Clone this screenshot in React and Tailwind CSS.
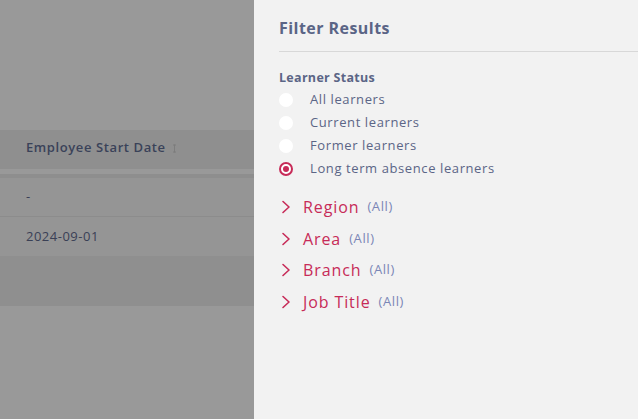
import React from "react";

const font = { fontFamily: '"Open Sans", "Noto Sans", sans-serif' };

function Radio({ checked }) {
  if (checked) {
    return (
      <span className="w-[14px] h-[14px] rounded-full border-[2px] border-[#c72b58] bg-white flex items-center justify-center">
        <span className="w-[6px] h-[6px] rounded-full bg-[#c72b58]" />
      </span>
    );
  }
  return <span className="w-[14px] h-[14px] rounded-full bg-white" />;
}

function Chevron() {
  return (
    <svg width="10" height="14" viewBox="0 0 10 14" fill="none" className="shrink-0">
      <path d="M2 1.5 L8 7 L2 12.5" stroke="#c72b58" strokeWidth="1.6" strokeLinecap="round" strokeLinejoin="round" />
    </svg>
  );
}

export default function App() {
  const opts = [
    ["All learners", false],
    ["Current learners", false],
    ["Former learners", false],
    ["Long term absence learners", true],
  ];
  const groups = ["Region", "Area", "Branch", "Job Title"];
  return (
    <div className="w-[638px] h-[419px] flex overflow-hidden" style={font}>
      <div className="w-[254px] h-full bg-[#999999] flex flex-col">
        <div className="h-[130px]" />
        <div className="h-[39px] bg-[#8f8f8f] flex items-center pl-[26px] pb-[4px]">
          <span className="text-[13px] font-semibold tracking-[0.6px] text-[#3a4259]">Employee Start Date</span>
          <svg width="5" height="9" viewBox="0 0 5 9" className="ml-[6px] mt-[1px]">
            <path d="M2.5 0.5 V8.5 M1 1 H4 M1 8 H4" stroke="#7d7d7d" strokeWidth="1" fill="none" />
          </svg>
        </div>
        <div className="h-[5px]" />
        <div className="h-[4px] bg-[#8e8e8e]" />
        <div className="h-[39px] bg-[#959595] border-b border-[#8c8c8c] flex items-center pl-[26px] text-[13px] tracking-[0.5px] text-[#3a4055]">-</div>
        <div className="h-[39px] bg-[#959595] flex items-center pl-[26px] text-[13px] tracking-[0.5px] text-[#3a4055]">2024-09-01</div>
        <div className="h-[50px] bg-[#8f8f8f]" />
      </div>
      <div className="flex-1 h-full bg-[#f2f2f2] pl-[25px]">
        <div className="h-[52px] border-b border-[#d8d8d8] pt-[17px]">
          <div className="text-[16px] leading-[22px] font-bold tracking-[0.45px] text-[#5b6586]">Filter Results</div>
        </div>
        <div className="pt-[17px] text-[12.5px] font-bold tracking-[0.3px] text-[#5b6586] leading-[18px]">Learner Status</div>
        <div className="flex flex-col pt-[1px]">
          {opts.map(([label, c]) => (
            <div key={label} className="h-[23px] flex items-center">
              <span className="w-[31px] flex items-center">
                <Radio checked={c} />
              </span>
              <span className="text-[13px] tracking-[0.6px] text-[#5b6586]">{label}</span>
            </div>
          ))}
        </div>
        <div className="flex flex-col pt-[11px]">
          {groups.map((g) => (
            <div key={g} className="h-[31.7px] flex items-center">
              <span className="w-[24px] pl-[2px] flex items-center">
                <Chevron />
              </span>
              <span className="text-[16px] tracking-[0.9px] text-[#c72b58]">{g}</span>
              <span className="ml-[8px] text-[13px] tracking-[0.6px] text-[#7a86b6]">(All)</span>
            </div>
          ))}
        </div>
      </div>
    </div>
  );
}
